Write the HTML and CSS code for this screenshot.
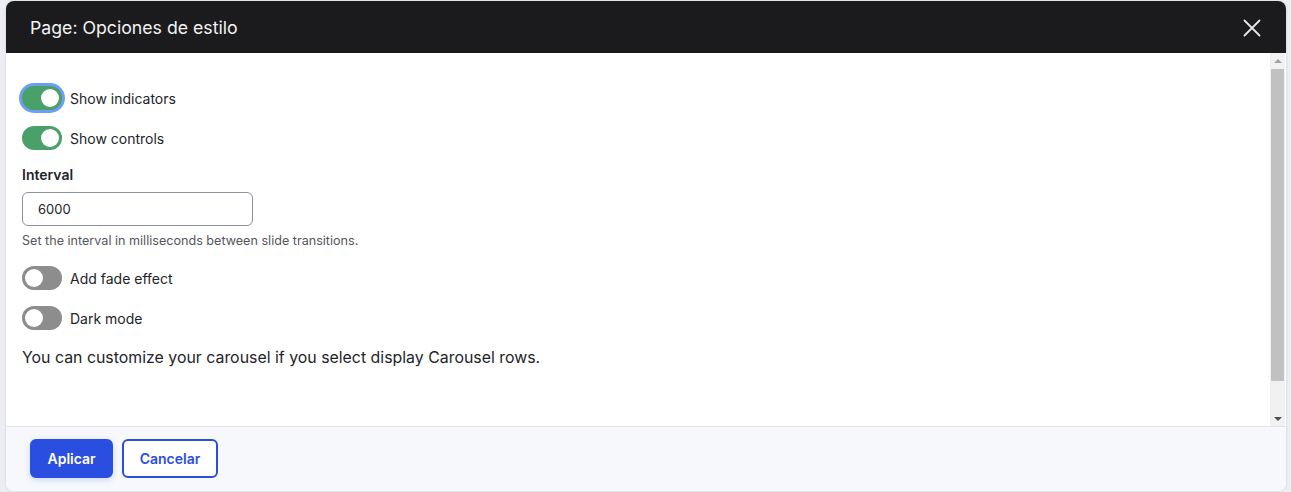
FILE: index.html
```html
<!DOCTYPE html>
<html lang="es">
<head>
<meta charset="utf-8">
<title>Page: Opciones de estilo</title>
<link rel="stylesheet" href="styles.css">
</head>
<body>
<div class="dialog" role="dialog">
  <div class="dialog-header">
    <h2 class="dialog-title">Page: Opciones de estilo</h2>
    <button class="dialog-close" aria-label="Cerrar">
      <svg width="18" height="18" viewBox="0 0 18 18" aria-hidden="true"><path d="M1.5 1.5 L16.5 16.5 M16.5 1.5 L1.5 16.5" stroke="#e6e6e6" stroke-width="1.8" fill="none" stroke-linecap="round"/></svg>
    </button>
  </div>
  <div class="dialog-body">
    <div class="body-content">
      <div class="toggle-row">
        <span class="switch on focus"><span class="knob"></span></span>
        <span class="toggle-label">Show indicators</span>
      </div>
      <div class="toggle-row">
        <span class="switch on"><span class="knob"></span></span>
        <span class="toggle-label">Show controls</span>
      </div>
      <div class="field">
        <label class="field-label">Interval</label>
        <div class="text-input">6000</div>
        <div class="field-desc">Set the interval in milliseconds between slide transitions.</div>
      </div>
      <div class="toggle-row">
        <span class="switch"><span class="knob"></span></span>
        <span class="toggle-label">Add fade effect</span>
      </div>
      <div class="toggle-row">
        <span class="switch"><span class="knob"></span></span>
        <span class="toggle-label">Dark mode</span>
      </div>
      <p class="note">You can customize your carousel if you select display Carousel rows.</p>
    </div>
    <div class="scrollbar" aria-hidden="true">
      <div class="sb-btn"><span class="arrow-up"></span></div>
      <div class="sb-track"><div class="sb-thumb"></div></div>
      <div class="sb-btn"><span class="arrow-down"></span></div>
    </div>
  </div>
  <div class="dialog-footer">
    <button class="btn btn-primary">Aplicar</button>
    <button class="btn btn-outline">Cancelar</button>
  </div>
</div>
</body>
</html>
```
FILE: styles.css
```css
* { box-sizing: border-box; }
html, body { height: 100%; }
body {
  margin: 0;
  background: #eceef3;
  font-family: Inter, "Noto Sans", sans-serif;
  color: #232429;
  overflow: hidden;
}
.dialog {
  margin: 1px 5px 1px 6px;
  height: 490px;
  background: #ffffff;
  border-radius: 8px;
  display: flex;
  flex-direction: column;
  box-shadow: 0 0 3px rgba(0,0,0,0.12);
  overflow: hidden;
}
.dialog-header {
  flex: 0 0 52px;
  background: #1b1b1d;
  display: flex;
  align-items: center;
  justify-content: space-between;
  padding: 1px 24px 0 24px;
}
.dialog-title {
  margin: 0;
  font-size: 17.7px;
  font-weight: 400;
  color: #f2f2f2;
}
.dialog-close {
  background: none;
  border: 0;
  padding: 0;
  width: 18px;
  height: 18px;
  display: flex;
  margin-right: 1px;
}
.dialog-body {
  flex: 1;
  display: flex;
  min-height: 0;
}
.body-content {
  flex: 1;
  padding: 33px 16px 0 16px;
}
.scrollbar {
  flex: 0 0 15px;
  margin-right: 1px;
  background: #f1f1f1;
  display: flex;
  flex-direction: column;
}
.sb-btn {
  flex: 0 0 15px;
  display: flex;
  align-items: center;
  justify-content: center;
}
.arrow-up {
  width: 0;
  height: 0;
  border-left: 4px solid transparent;
  border-right: 4px solid transparent;
  border-bottom: 4px solid #a3a3a3;
}
.arrow-down {
  width: 0;
  height: 0;
  border-left: 4px solid transparent;
  border-right: 4px solid transparent;
  border-top: 4px solid #505050;
}
.sb-track {
  flex: 1;
  padding: 1px 1px 0 1px;
  display: flex;
  flex-direction: column;
}
.sb-thumb {
  height: 312px;
  background: #c1c1c1;
}
.toggle-row {
  display: flex;
  align-items: center;
  gap: 8px;
  height: 24px;
  margin-bottom: 16px;
}
.switch {
  width: 40px;
  height: 24px;
  border-radius: 12px;
  background: #8d8d8d;
  position: relative;
  flex: 0 0 40px;
}
.switch.on { background: #49a068; }
.switch.focus { box-shadow: 0 0 0 3px #6e9ef2; }
.knob {
  position: absolute;
  top: 3px;
  left: 3px;
  width: 18px;
  height: 18px;
  border-radius: 50%;
  background: #ffffff;
}
.switch.on .knob { left: 19px; }
.toggle-label {
  font-size: 14px;
  color: #232429;
}
.field {
  margin-top: -2px;
  margin-bottom: 16px;
}
.field-label {
  display: block;
  font-size: 14px;
  font-weight: 600;
  line-height: 20px;
  padding-top: 1px;
  margin-bottom: 7px;
}
.text-input {
  width: 231px;
  height: 34px;
  border: 1px solid #8e929c;
  border-radius: 6px;
  padding: 0 15px;
  display: flex;
  align-items: center;
  font-size: 13px;
  color: #232429;
}
.field-desc {
  margin-top: 6px;
  font-size: 12.6px;
  line-height: 18px;
  color: #55565b;
}
.note {
  margin: 16px 0 0 0;
  font-size: 15.88px;
  line-height: 24px;
  color: #232429;
}
.dialog-footer {
  flex: 0 0 65px;
  background: #f7f8fc;
  border-top: 1px solid #e2e4ea;
  display: flex;
  align-items: flex-start;
  gap: 9px;
  padding: 12px 24px 0 24px;
}
.btn {
  height: 39px;
  border-radius: 6px;
  font-family: Inter, "Noto Sans", sans-serif;
  font-size: 14px;
  font-weight: 600;
  padding: 0 15.5px;
}
.btn-primary {
  background: #2a4ee0;
  border: 2px solid #2a4ee0;
  color: #ffffff;
  box-shadow: 0 2px 6px rgba(42,78,224,0.2);
}
.btn-outline {
  background: #ffffff;
  border: 2px solid #2a4ee0;
  color: #2a4ee0;
}
```
